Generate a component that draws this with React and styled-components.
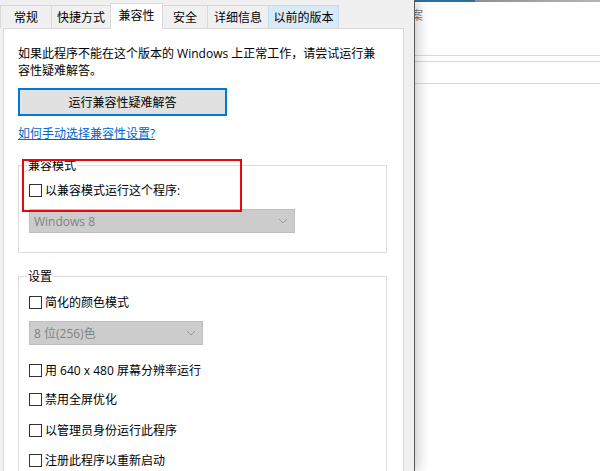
import React from "react";
import styled, { createGlobalStyle } from "styled-components";

const GlobalStyle = createGlobalStyle`
  html, body {
    margin: 0;
    padding: 0;
    background: #ffffff;
    overflow: hidden;
  }
  body {
    font-family: "Open Sans", "Noto Sans CJK SC", sans-serif;
    font-size: 12px;
    color: #000;
  }
`;

const Page = styled.div`
  width: 600px;
  height: 471px;
  display: flex;
  overflow: hidden;
`;

const Dialog = styled.div`
  position: relative;
  z-index: 1;
  width: 415px;
  flex: none;
  box-sizing: border-box;
  background: #f0f0f0;
  border-right: 1px solid #5c5c5c;
  box-shadow: 3px 0 12px rgba(0, 0, 0, 0.22);
  padding-top: 3px;
  display: flex;
  flex-direction: column;
`;

const TabStrip = styled.div`
  display: flex;
  align-items: flex-end;
  height: 25px;
`;

const Tab = styled.div`
  box-sizing: border-box;
  width: ${({ $w }) => $w}px;
  height: ${({ $active }) => ($active ? 26 : 23)}px;
  margin-right: -1px;
  margin-bottom: ${({ $active }) => ($active ? -1 : 0)}px;
  position: relative;
  z-index: ${({ $active }) => ($active ? 2 : 1)};
  border: 1px solid ${({ $hover }) => ($hover ? "#c4dcf2" : "#d9d9d9")};
  border-bottom: none;
  background: ${({ $active, $hover }) =>
    $active ? "#ffffff" : $hover ? "#d8e9f8" : "#f0f0f0"};
  display: flex;
  align-items: center;
  justify-content: center;
  padding-bottom: ${({ $active }) => ($active ? 3 : 0)}px;
  font-size: 12px;
  line-height: 17px;
  white-space: nowrap;
`;

const Panel = styled.div`
  margin-left: 3px;
  width: 401px;
  flex: 1;
  box-sizing: border-box;
  background: #ffffff;
  border: 1px solid #d9d9d9;
  padding: 16px 16px 0 14px;
  display: flex;
  flex-direction: column;
`;

const Intro = styled.p`
  margin: 0;
  line-height: 17px;
  font-size: 12px;
`;

const TroubleButton = styled.button`
  margin-top: 9px;
  width: 209px;
  height: 28px;
  box-sizing: border-box;
  border: 2px solid #0078d7;
  background: #e1e1e1;
  font-family: inherit;
  font-size: 12px;
  color: #000;
  padding: 0;
`;

const HelpLink = styled.a`
  margin-top: 9px;
  align-self: flex-start;
  color: #0066cc;
  text-decoration: underline;
  line-height: 17px;
  font-size: 12px;
`;

const Group = styled.fieldset`
  margin: ${({ $top }) => $top}px 0 0 0;
  width: 369px;
  box-sizing: border-box;
  border: 1px solid #dcdcdc;
  padding: 0 0 ${({ $bottom }) => $bottom}px 10px;
  min-width: 0;
`;

const Legend = styled.legend`
  padding: 0 1px;
  margin-left: -2px;
  line-height: 17px;
  font-size: 12px;
`;

const CheckRow = styled.label`
  display: flex;
  align-items: center;
  gap: 3px;
  height: 17px;
  margin-top: ${({ $top }) => $top}px;
  line-height: 17px;
  white-space: nowrap;
`;

const Box = styled.span`
  width: 13px;
  height: 13px;
  box-sizing: border-box;
  border: 1px solid #333333;
  background: #fff;
  flex: none;
`;

const Select = styled.div`
  margin-top: ${({ $top }) => $top}px;
  width: ${({ $w }) => $w}px;
  height: 24px;
  box-sizing: border-box;
  background: #cccccc;
  border: 1px solid #bfbfbf;
  color: #838383;
  display: flex;
  align-items: center;
  justify-content: space-between;
  padding: 0 6px 0 4px;
  font-size: 12px;
`;

const Highlight = styled.div`
  position: absolute;
  left: 22px;
  top: 159px;
  width: 220px;
  height: 53px;
  box-sizing: border-box;
  border: 2px solid #e8070b;
  pointer-events: none;
  z-index: 3;
`;

const BackWindow = styled.div`
  flex: 1;
  background: #ffffff;
  display: flex;
  flex-direction: column;
  overflow: hidden;
`;

const TopEdge = styled.div`
  height: 2px;
  flex: none;
  background: linear-gradient(
    to right,
    #2d6e9e 0,
    #2d6e9e 60px,
    #8c8f92 60px,
    #b4b6b8 100%
  );
`;

const Caption = styled.div`
  margin: 7px 0 0 -4px;
  color: #7a7a7a;
  font-size: 12px;
  line-height: 14px;
  height: 34px;
`;

const Rule = styled.div`
  height: 1px;
  flex: none;
  background: #dadada;
  margin-top: ${({ $top }) => $top}px;
`;

function Chevron() {
  return (
    <svg width="10" height="6" viewBox="0 0 10 6">
      <polyline
        points="1,1 5,5 9,1"
        fill="none"
        stroke="#9a9a9a"
        strokeWidth="1"
      />
    </svg>
  );
}

const tabs = [
  { label: "常规", w: 52 },
  { label: "快捷方式", w: 60 },
  { label: "兼容性", w: 53, active: true },
  { label: "安全", w: 46 },
  { label: "详细信息", w: 62 },
  { label: "以前的版本", w: 71, hover: true },
];

export default function App() {
  return (
    <>
      <GlobalStyle />
      <Page>
        <Dialog>
          <TabStrip>
            {tabs.map((t) => (
              <Tab key={t.label} $w={t.w} $active={t.active} $hover={t.hover}>
                {t.label}
              </Tab>
            ))}
          </TabStrip>
          <Panel>
            <Intro>
              如果此程序不能在这个版本的 Windows 上正常工作，请尝试运行兼
              <br />
              容性疑难解答。
            </Intro>
            <TroubleButton>运行兼容性疑难解答</TroubleButton>
            <HelpLink>如何手动选择兼容性设置?</HelpLink>

            <Group $top={15} $bottom={19}>
              <Legend>兼容模式</Legend>
              <CheckRow $top={8}>
                <Box />
                以兼容模式运行这个程序:
              </CheckRow>
              <Select $top={10} $w={266}>
                Windows 8
                <Chevron />
              </Select>
            </Group>

            <Group $top={15} $bottom={40}>
              <Legend>设置</Legend>
              <CheckRow $top={9}>
                <Box />
                简化的颜色模式
              </CheckRow>
              <Select $top={10} $w={174}>
                8 位(256)色
                <Chevron />
              </Select>
              <CheckRow $top={17}>
                <Box />
                用 640 x 480 屏幕分辨率运行
              </CheckRow>
              <CheckRow $top={12}>
                <Box />
                禁用全屏优化
              </CheckRow>
              <CheckRow $top={14}>
                <Box />
                以管理员身份运行此程序
              </CheckRow>
              <CheckRow $top={13}>
                <Box />
                注册此程序以重新启动
              </CheckRow>
            </Group>
          </Panel>
          <Highlight />
        </Dialog>
        <BackWindow>
          <TopEdge />
          <Caption>案</Caption>
          <Rule $top={12} />
          <Rule $top={5} />
          <Rule $top={21} />
        </BackWindow>
      </Page>
    </>
  );
}
